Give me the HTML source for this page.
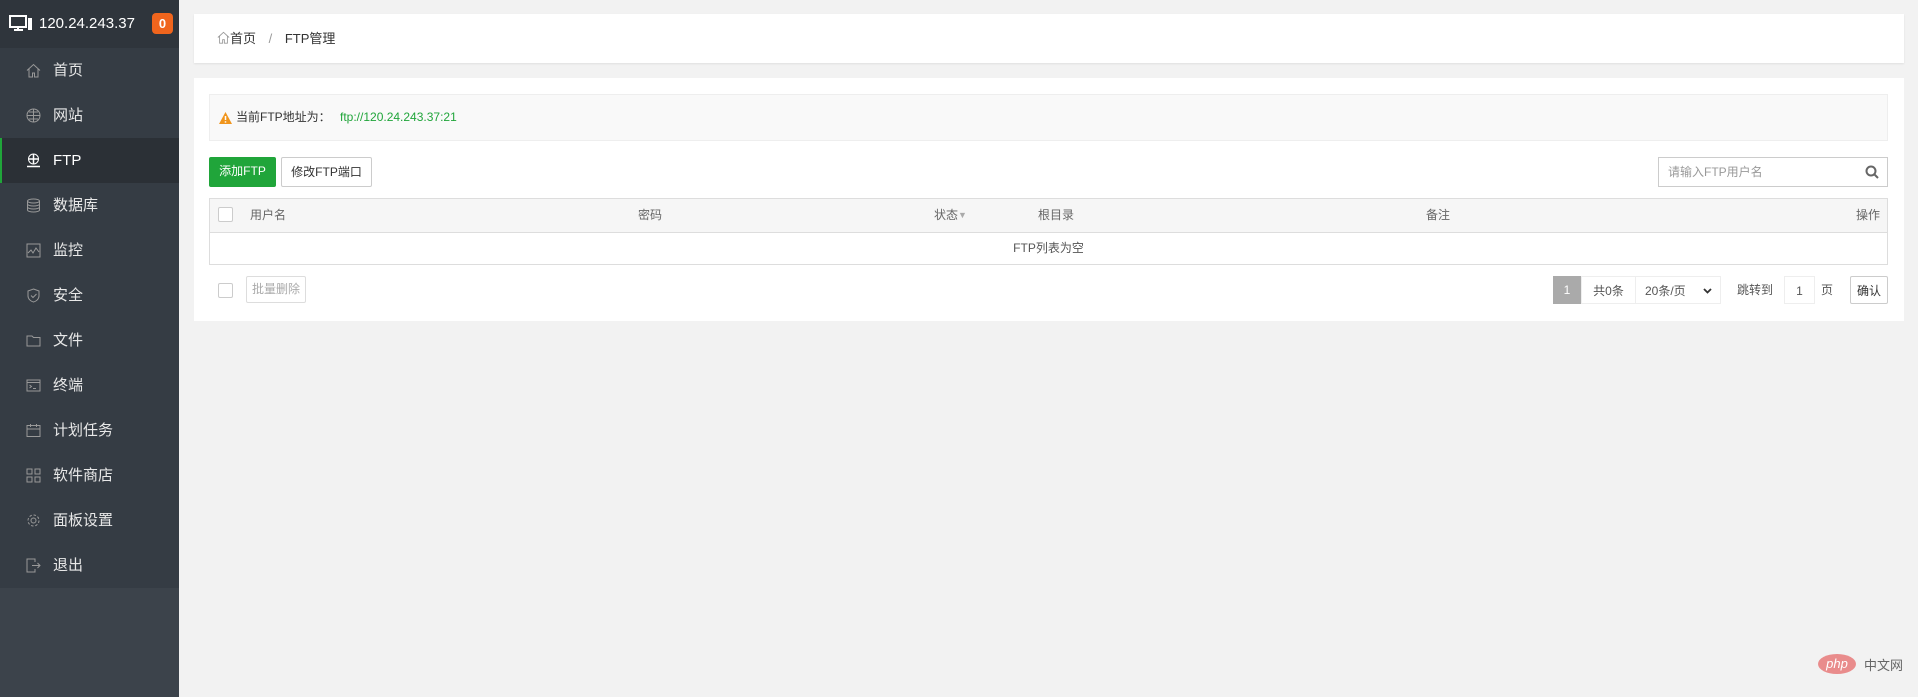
<!DOCTYPE html>
<html><head><meta charset="utf-8"><style>
*{box-sizing:border-box;margin:0;padding:0}
body{width:1918px;height:697px;overflow:hidden;background:#f2f2f2;font-family:"Liberation Sans","Microsoft YaHei","Noto Sans CJK SC",sans-serif;font-size:12px;color:#555;position:relative}
.side{position:absolute;left:0;top:0;width:179px;height:697px;background:#3c434b}
.top{height:48px;background:#2f353c;color:#fff;font-size:15px;position:relative}
.top .ip{position:absolute;left:39px;top:15px}
.top .bd{position:absolute;left:152px;top:13px;width:21px;height:21px;background:#f0651d;border-radius:4px;color:#fff;font-weight:bold;font-size:13px;text-align:center;line-height:21px}
.menu{background:#353c44}
.mi{height:45px;line-height:45px;color:#e8e8e8;font-size:15px;padding-left:53px;position:relative}
.mi svg{position:absolute;left:26px;top:15px}
.mi.act{background:#2b3036;border-left:2px solid #20a53a;padding-left:51px;color:#fff}
.mi.act svg{left:24px}
.card{position:absolute;background:#fff;left:194px;width:1710px}
.bc{top:14px;height:49px;box-shadow:0 1px 2px rgba(0,0,0,.08);font-size:13px;color:#333;line-height:49px;padding-left:23px}
.main{top:78px;height:243px}
.alert{position:absolute;left:15px;top:16px;width:1679px;height:47px;background:#f9f9f9;border:1px solid #eee;line-height:45px;padding-left:26px;color:#333}
.alert .tri{position:absolute;left:9px;top:17px}
.btn{position:absolute;top:79px;height:30px;line-height:28px;border-radius:2px;font-size:12px;text-align:center}
.search{position:absolute;left:1464px;top:79px;width:230px;height:30px;border:1px solid #ccc;color:#999;padding-left:9px;line-height:28px}
.tbl{position:absolute;left:15px;top:120px;width:1679px;height:67px;border:1px solid #ddd}
.th{height:34px;background:#f6f6f6;border-bottom:1px solid #ddd;position:relative;color:#666;line-height:33px}
.th span{position:absolute}
.cb{position:absolute;width:15px;height:15px;border:1px solid #ccc;border-radius:2px;background:#fff}
.pg{position:absolute;top:198px;height:28px;line-height:28px;color:#555;font-size:12px}
</style></head><body>
<div class="side">
 <div class="top">
  <svg style="position:absolute;left:9px;top:15px" width="24" height="17" viewBox="0 0 24 17"><rect x="1" y="1" width="16" height="11" fill="none" stroke="#fff" stroke-width="2"/><path d="M5 15h9M9 12v3" stroke="#fff" stroke-width="2"/><rect x="19" y="3" width="4" height="12" fill="#fff"/></svg>
  <span class="ip">120.24.243.37</span><span class="bd">0</span>
 </div>
 <div class="menu">
  <div class="mi"><svg width="15" height="15" viewBox="0 0 15 15" fill="none" stroke="#999"><path d="M1 7.5L7.5 1.5 14 7.5M3 6v8h3.5v-4h2v4H12V6"/></svg>首页</div>
  <div class="mi"><svg width="15" height="15" viewBox="0 0 15 15" fill="none" stroke="#999"><circle cx="7.5" cy="7.5" r="6.5"/><path d="M1 7.5h13M7.5 1v13M3 4h9M3 11h9"/></svg>网站</div>
  <div class="mi act"><svg width="15" height="15" viewBox="0 0 15 15" fill="none" stroke="#fff"><circle cx="7.5" cy="6" r="5"/><path d="M2.5 6h10M7.5 1v10M1 13.5h13" stroke-width="1.5"/></svg>FTP</div>
  <div class="mi"><svg width="15" height="15" viewBox="0 0 15 15" fill="none" stroke="#999"><ellipse cx="7.5" cy="3" rx="6" ry="2"/><path d="M1.5 3v9c0 1.1 2.7 2 6 2s6-.9 6-2V3M1.5 6c0 1.1 2.7 2 6 2s6-.9 6-2M1.5 9c0 1.1 2.7 2 6 2s6-.9 6-2"/></svg>数据库</div>
  <div class="mi"><svg width="15" height="15" viewBox="0 0 15 15" fill="none" stroke="#999"><rect x="1" y="1" width="13" height="13"/><path d="M2 10l3-3 2 3 3-5 3 4"/></svg>监控</div>
  <div class="mi"><svg width="15" height="15" viewBox="0 0 15 15" fill="none" stroke="#999"><path d="M7.5 1L13 3v5c0 3-3 5.5-5.5 6C5 13.5 2 11 2 8V3z"/><path d="M5 7.5l2 2 3.5-3.5"/></svg>安全</div>
  <div class="mi"><svg width="15" height="15" viewBox="0 0 15 15" fill="none" stroke="#999"><path d="M1 3h5l1.5 1.5H14V13H1z"/></svg>文件</div>
  <div class="mi"><svg width="15" height="15" viewBox="0 0 15 15" fill="none" stroke="#999"><rect x="1" y="2" width="13" height="11"/><path d="M1 4.5h13M3.5 7l2 1.5-2 1.5M7 10.5h3"/></svg>终端</div>
  <div class="mi"><svg width="15" height="15" viewBox="0 0 15 15" fill="none" stroke="#999"><rect x="1" y="2.5" width="13" height="11"/><path d="M1 6h13M4.5 1v3M10.5 1v3"/></svg>计划任务</div>
  <div class="mi"><svg width="15" height="15" viewBox="0 0 15 15" fill="none" stroke="#999"><rect x="1" y="1" width="5" height="5"/><rect x="9" y="1" width="5" height="5"/><rect x="1" y="9" width="5" height="5"/><rect x="9" y="9" width="5" height="5"/></svg>软件商店</div>
  <div class="mi"><svg width="15" height="15" viewBox="0 0 15 15" fill="none" stroke="#999"><circle cx="7.5" cy="7.5" r="2.5"/><circle cx="7.5" cy="7.5" r="5.5" stroke-dasharray="2.5 1.8"/></svg>面板设置</div>
  <div class="mi"><svg width="15" height="15" viewBox="0 0 15 15" fill="none" stroke="#999"><path d="M9 4V1H1v13h8v-3M6 7.5h8M11.5 5l2.5 2.5-2.5 2.5"/></svg>退出</div>
 </div>
</div>
<div class="card bc"><svg width="13" height="13" viewBox="0 0 15 15" fill="none" stroke="#999" style="vertical-align:-1px"><path d="M1 7.5L7.5 1.5 14 7.5M3 6v8h3.5v-4h2v4H12V6"/></svg>首页 <span style="color:#999;margin:0 9px">/</span> FTP管理</div>
<div class="card main">
 <div class="alert"><svg class="tri" width="13" height="12" viewBox="0 0 13 12"><path d="M6.5 0L13 12H0z" fill="#f0951d"/><path d="M6.5 4v4M6.5 9.3v1.3" stroke="#fff" stroke-width="1.5"/></svg>当前FTP地址为： <span style="color:#20a53a;margin-left:6px">ftp://120.24.243.37:21</span></div>
 <div class="btn" style="left:15px;width:67px;background:#20a53a;color:#fff">添加FTP</div>
 <div class="btn" style="left:87px;width:91px;border:1px solid #ccc;color:#333">修改FTP端口</div>
 <div class="search">请输入FTP用户名<svg style="position:absolute;right:8px;top:7px" width="14" height="14" viewBox="0 0 14 14" fill="none" stroke="#666" stroke-width="2"><circle cx="6" cy="6" r="4.5"/><path d="M9.5 9.5L13 13"/></svg></div>
 <div class="tbl">
  <div class="th"><div class="cb" style="left:8px;top:8px"></div><span style="left:40px">用户名</span><span style="left:428px">密码</span><span style="left:724px">状态 <span style="color:#aaa;font-size:9px">▼</span></span><span style="left:828px">根目录</span><span style="left:1216px">备注</span><span style="right:7px">操作</span></div>
  <div style="text-align:center;line-height:31px;color:#555">FTP列表为空</div>
 </div>
 <div class="cb" style="left:24px;top:205px"></div>
 <div class="btn" style="left:52px;top:198px;height:27px;line-height:25px;width:60px;border:1px solid #ddd;color:#aaa">批量删除</div>
 <div class="pg" style="left:1359px;width:28px;background:#aaa;color:#fff;text-align:center">1</div>
 <div class="pg" style="left:1387px;width:55px;border:1px solid #eee;text-align:center">共0条</div>
 <div class="pg" style="left:1441px;width:86px;border:1px solid #eee;padding-left:9px">20条/页<svg style="position:absolute;right:8px;top:11px" width="9" height="6" viewBox="0 0 9 6"><path d="M1 1l3.5 3.5L8 1" fill="none" stroke="#333" stroke-width="1.8"/></svg></div>
 <div class="pg" style="left:1543px">跳转到</div>
 <div class="pg" style="left:1590px;width:31px;border:1px solid #eee;text-align:center">1</div>
 <div class="pg" style="left:1627px">页</div>
 <div class="pg" style="left:1656px;width:38px;border:1px solid #ccc;text-align:center;color:#333;border-radius:2px">确认</div>
</div>
<div style="position:absolute;left:1818px;top:654px;width:38px;height:20px;border-radius:50%;background:#e98c8c;color:#fff;font-style:italic;text-align:center;line-height:19px;font-size:13px">php</div>
<div style="position:absolute;left:1864px;top:655px;font-size:13px;color:#666">中文网</div>
</body></html>
